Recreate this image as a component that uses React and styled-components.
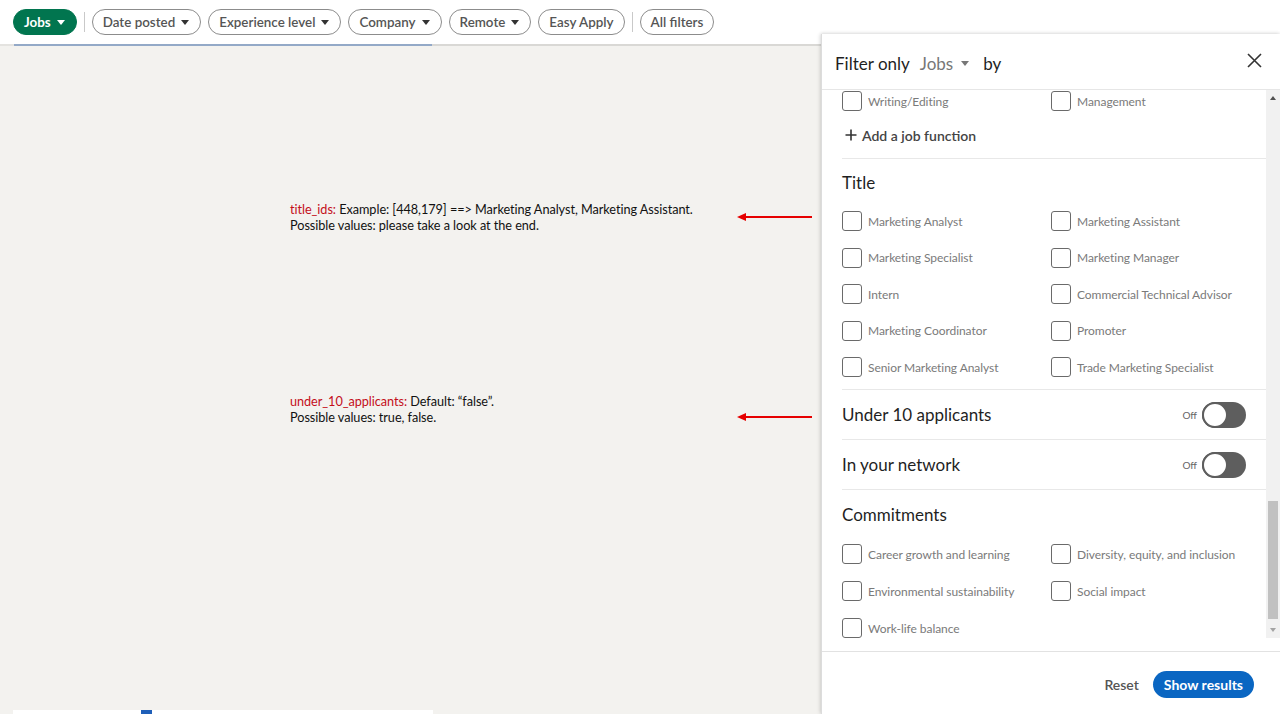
import React from "react";
import styled, { createGlobalStyle } from "styled-components";

const Global = createGlobalStyle`
  html, body { margin: 0; padding: 0; }
  body { font-family: Lato, "Open Sans", sans-serif; background: #f3f2ef; overflow: hidden; }
  * { box-sizing: border-box; }
`;

const Page = styled.div`
  position: relative;
  width: 1280px;
  height: 714px;
  display: flex;
  flex-direction: column;
  background: #f3f2ef;
  overflow: hidden;
`;

const TopBar = styled.div`
  height: 44px;
  background: #fff;
  display: flex;
  align-items: center;
  gap: 7px;
  padding: 0 0 0 13px;
  flex-shrink: 0;
`;

const Pill = styled.button`
  height: 26px;
  display: inline-flex;
  align-items: center;
  gap: 6px;
  padding: ${(p) => (p.$caret ? "0 11px 0 10px" : "0 10px")};
  border-radius: 13px;
  border: 1px solid ${(p) => (p.$active ? "#01754f" : "#8c8c8c")};
  background: ${(p) => (p.$active ? "#01754f" : "#fff")};
  color: ${(p) => (p.$active ? "#fff" : "#555")};
  font-family: Lato, sans-serif;
  font-size: 13.4px;
  font-weight: ${(p) => (p.$active ? 700 : 600)};
  white-space: nowrap;
  cursor: pointer;
`;

const Caret = styled.span`
  width: 0;
  height: 0;
  border-left: 4px solid transparent;
  border-right: 4px solid transparent;
  border-top: 5px solid ${(p) => p.$color || "currentColor"};
  display: inline-block;
`;

const VDivider = styled.span`
  width: 1px;
  height: 20px;
  background: #c9c9c9;
`;

const Rule = styled.div`
  height: 2px;
  flex-shrink: 0;
  background: linear-gradient(to right, #e4e3e0 0 14px, #93a9c7 14px 432px, #d9d8d5 432px);
`;

const Canvas = styled.div`
  flex: 1;
  padding: 155px 0 0 290px;
  display: flex;
  flex-direction: column;
  gap: 160px;
`;

const NoteRow = styled.div`
  width: 523px;
  display: flex;
  align-items: ${(p) => (p.$arrowBottom ? "flex-end" : "center")};
  justify-content: space-between;
`;

const NoteText = styled.div`
  font-family: Lato, sans-serif;
  font-size: 12.7px;
  line-height: 16px;
  color: #111;
  letter-spacing: -0.05px;
`;

const ArrowWrap = styled.div`
  display: flex;
  margin-bottom: ${(p) => (p.$bottom ? "3px" : "0")};
`;

const Key = styled.span`
  color: #c40f1a;
`;

const BottomStrip = styled.div`
  height: 4px;
  margin-left: 13px;
  width: 420px;
  background: #fff;
  display: flex;
  padding-left: 128px;
  flex-shrink: 0;
`;

const BlueMark = styled.span`
  width: 11px;
  height: 4px;
  background: #1f5fb8;
`;

const Panel = styled.div`
  position: absolute;
  left: 821px;
  top: 34px;
  width: 459px;
  height: 680px;
  background: #fff;
  border-left: 1px solid #dcdcdc;
  box-shadow: -1px 0 4px rgba(0, 0, 0, 0.12), 0 -1px 3px rgba(0, 0, 0, 0.08);
  display: flex;
  flex-direction: column;
`;

const PanelHeader = styled.div`
  height: 56px;
  flex-shrink: 0;
  display: flex;
  align-items: center;
  padding: 4px 14px 0 13px;
  border-bottom: 1px solid #e6e6e6;
  font-size: 17px;
  color: #1f1f1f;
  gap: 10px;
`;

const JobsSelect = styled.span`
  color: #777;
  display: inline-flex;
  align-items: center;
  gap: 8px;
  margin-right: 4px;
`;

const CloseBtn = styled.button`
  margin-left: auto;
  border: none;
  background: none;
  padding: 0;
  width: 16px;
  height: 16px;
  display: flex;
  align-items: center;
  justify-content: center;
  margin-top: -6px;
  margin-right: 4px;
`;

const Body = styled.div`
  height: 548px;
  display: flex;
  flex-shrink: 0;
`;

const Content = styled.div`
  flex: 1;
  padding-left: 20px;
  overflow: hidden;
`;

const Section = styled.div`
  padding: ${(p) => p.$pad || "0"};
  border-bottom: ${(p) => (p.$last ? "none" : "1px solid #e8e8e8")};
`;

const Heading = styled.div`
  font-size: 17px;
  line-height: 22px;
  color: #1f1f1f;
  margin-bottom: ${(p) => p.$mb || "18px"};
`;

const Grid = styled.div`
  display: grid;
  grid-template-columns: 209px 1fr;
  row-gap: ${(p) => p.$gap || "16.5px"};
`;

const CheckRow = styled.label`
  display: flex;
  align-items: center;
  gap: 6px;
  height: 20px;
  font-size: 12px;
  color: #7a7a7a;
  white-space: nowrap;
  letter-spacing: -0.05px;
`;

const Box = styled.span`
  width: 20px;
  height: 20px;
  border: 1.3px solid #6a6a6a;
  border-radius: 3px;
  flex-shrink: 0;
`;

const AddLink = styled.div`
  display: flex;
  align-items: center;
  gap: 5px;
  padding-left: 3px;
  margin-top: 14px;
  height: 20px;
  font-size: 14px;
  font-weight: 600;
  color: #444;
`;

const ToggleRow = styled.div`
  height: 50px;
  display: flex;
  align-items: center;
  padding-right: 20px;
  border-bottom: 1px solid #e8e8e8;
`;

const ToggleLabel = styled.div`
  font-size: 17px;
  color: #1f1f1f;
  flex: 1;
`;

const OffText = styled.span`
  font-size: 10px;
  color: #666;
  margin-right: 5px;
`;

const Switch = styled.span`
  width: 44px;
  height: 26px;
  border-radius: 13px;
  background: #5e5e5e;
  position: relative;
  display: inline-block;
`;

const Knob = styled.span`
  position: absolute;
  left: 0;
  top: 0;
  width: 26px;
  height: 26px;
  border-radius: 50%;
  background: #fff;
  border: 2px solid #5e5e5e;
`;

const ScrollTrack = styled.div`
  width: 14px;
  background: #f1f1f1;
  display: flex;
  flex-direction: column;
  align-items: center;
  padding: 3px 0;
`;

const ScrollArrow = styled.span`
  width: 0;
  height: 0;
  border-left: 3px solid transparent;
  border-right: 3px solid transparent;
  ${(p) => (p.$down ? "border-top: 4px solid #a3a3a3;" : "border-bottom: 4px solid #505050;")}
  margin: 3px 0;
`;

const ScrollSpace = styled.div`
  flex: 1;
  width: 100%;
  display: flex;
  flex-direction: column;
  justify-content: flex-end;
  align-items: center;
  padding-bottom: 6px;
`;

const Thumb = styled.div`
  width: 10px;
  height: 118px;
  background: #c1c1c1;
`;

const Footer = styled.div`
  margin-top: 13px;
  flex: 1;
  border-top: 1px solid #e2e2e2;
  display: flex;
  align-items: center;
  justify-content: flex-end;
  gap: 14px;
  padding: 2px 26px 0 0;
`;

const ResetBtn = styled.button`
  border: none;
  background: none;
  font-family: Lato, sans-serif;
  font-size: 14px;
  font-weight: 600;
  color: #555;
  padding: 0;
`;

const ShowBtn = styled.button`
  height: 27px;
  padding: 0 11px;
  border: none;
  border-radius: 14px;
  background: #0a66c2;
  color: #fff;
  font-family: Lato, sans-serif;
  font-size: 14px;
  font-weight: 700;
`;

const Check = ({ children }) => (
  <CheckRow>
    <Box />
    {children}
  </CheckRow>
);

const titles = [
  "Marketing Analyst",
  "Marketing Assistant",
  "Marketing Specialist",
  "Marketing Manager",
  "Intern",
  "Commercial Technical Advisor",
  "Marketing Coordinator",
  "Promoter",
  "Senior Marketing Analyst",
  "Trade Marketing Specialist",
];

const commitments = [
  "Career growth and learning",
  "Diversity, equity, and inclusion",
  "Environmental sustainability",
  "Social impact",
  "Work-life balance",
];

const Arrow = () => (
  <svg width="76" height="10" viewBox="0 0 76 10">
    <line x1="6" y1="5" x2="75" y2="5" stroke="#e60000" strokeWidth="2" />
    <polygon points="0,5 9,1 9,9" fill="#e60000" />
  </svg>
);

export default function App() {
  return (
    <Page>
      <Global />
      <TopBar>
        <Pill $active $caret>
          Jobs <Caret />
        </Pill>
        <VDivider />
        <Pill $caret>
          Date posted <Caret $color="#333" />
        </Pill>
        <Pill $caret>
          Experience level <Caret $color="#333" />
        </Pill>
        <Pill $caret>
          Company <Caret $color="#333" />
        </Pill>
        <Pill $caret>
          Remote <Caret $color="#333" />
        </Pill>
        <Pill>Easy Apply</Pill>
        <VDivider />
        <Pill>All filters</Pill>
      </TopBar>
      <Rule />
      <Canvas>
        <NoteRow>
          <NoteText>
            <Key>title_ids:</Key> Example: [448,179] ==&gt; Marketing Analyst, Marketing Assistant.
            <br />
            Possible values: please take a look at the end.
          </NoteText>
          <ArrowWrap>
            <Arrow />
          </ArrowWrap>
        </NoteRow>
        <NoteRow $arrowBottom>
          <NoteText>
            <Key>under_10_applicants:</Key> Default: “false”.
            <br />
            Possible values: true, false.
          </NoteText>
          <ArrowWrap $bottom>
            <Arrow />
          </ArrowWrap>
        </NoteRow>
      </Canvas>
      <BottomStrip>
        <BlueMark />
      </BottomStrip>

      <Panel>
        <PanelHeader>
          <span>Filter only</span>
          <JobsSelect>
            Jobs <Caret $color="#777" />
          </JobsSelect>
          <span>by</span>
          <CloseBtn aria-label="close">
            <svg width="15" height="15" viewBox="0 0 15 15">
              <path d="M1 1 L14 14 M14 1 L1 14" stroke="#333" strokeWidth="1.6" />
            </svg>
          </CloseBtn>
        </PanelHeader>
        <Body>
          <Content>
            <Section $pad="1px 0 13px">
              <Grid>
                <Check>Writing/Editing</Check>
                <Check>Management</Check>
              </Grid>
              <AddLink>
                <svg width="12" height="12" viewBox="0 0 12 12">
                  <path d="M6 0.5 V11.5 M0.5 6 H11.5" stroke="#333" strokeWidth="1.6" />
                </svg>
                Add a job function
              </AddLink>
            </Section>
            <Section $pad="13px 0 12px">
              <Heading $mb="17px">Title</Heading>
              <Grid>
                {titles.map((t) => (
                  <Check key={t}>{t}</Check>
                ))}
              </Grid>
            </Section>
            <ToggleRow>
              <ToggleLabel>Under 10 applicants</ToggleLabel>
              <OffText>Off</OffText>
              <Switch>
                <Knob />
              </Switch>
            </ToggleRow>
            <ToggleRow>
              <ToggleLabel>In your network</ToggleLabel>
              <OffText>Off</OffText>
              <Switch>
                <Knob />
              </Switch>
            </ToggleRow>
            <Section $pad="14px 0 0" $last>
              <Heading $mb="18px">Commitments</Heading>
              <Grid $gap="17px">
                {commitments.map((t) => (
                  <Check key={t}>{t}</Check>
                ))}
              </Grid>
            </Section>
          </Content>
          <ScrollTrack>
            <ScrollArrow />
            <ScrollSpace>
              <Thumb />
            </ScrollSpace>
            <ScrollArrow $down />
          </ScrollTrack>
        </Body>
        <Footer>
          <ResetBtn>Reset</ResetBtn>
          <ShowBtn>Show results</ShowBtn>
        </Footer>
      </Panel>
    </Page>
  );
}
